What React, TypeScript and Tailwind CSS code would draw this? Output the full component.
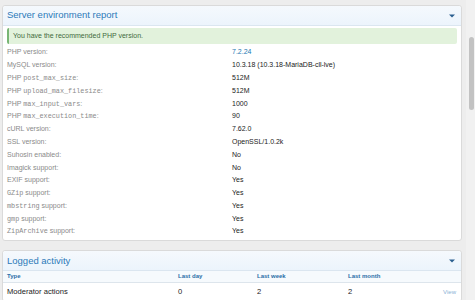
import React from "react";

const mono = "font-['Liberation_Mono',monospace]";

function Code({ children }: { children: React.ReactNode }) {
  return <span className={`${mono} text-[6.8px]`}>{children}</span>;
}

const rows: { label: React.ReactNode; value: React.ReactNode }[] = [
  { label: "PHP version:", value: <span className="text-[#2577b1]">7.2.24</span> },
  { label: "MySQL version:", value: "10.3.18 (10.3.18-MariaDB-cll-lve)" },
  { label: <>PHP <Code>post_max_size</Code>:</>, value: "512M" },
  { label: <>PHP <Code>upload_max_filesize</Code>:</>, value: "512M" },
  { label: <>PHP <Code>max_input_vars</Code>:</>, value: "1000" },
  { label: <>PHP <Code>max_execution_time</Code>:</>, value: "90" },
  { label: "cURL version:", value: "7.62.0" },
  { label: "SSL version:", value: "OpenSSL/1.0.2k" },
  { label: "Suhosin enabled:", value: "No" },
  { label: "Imagick support:", value: "No" },
  { label: "EXIF support:", value: "Yes" },
  { label: <><Code>GZip</Code> support:</>, value: "Yes" },
  { label: <><Code>mbstring</Code> support:</>, value: "Yes" },
  { label: <><Code>gmp</Code> support:</>, value: "Yes" },
  { label: <><Code>ZipArchive</Code> support:</>, value: "Yes" },
];

function Chevron() {
  return (
    <svg width="6" height="4" viewBox="0 0 6 4" className="mr-[2px]">
      <path d="M0 0.5 L6 0.5 L3 3.5 Z" fill="#2b5f8f" />
    </svg>
  );
}

function BlockHeader({ title }: { title: string }) {
  return (
    <div className="h-[20px] flex items-center justify-between px-[4px] bg-gradient-to-b from-[#f5f9fd] to-[#ecf4fc] border-b border-[#dbe6f0] rounded-t-[3px]">
      <span className="text-[9.5px] text-[#2d7ab9]">{title}</span>
      <Chevron />
    </div>
  );
}

export default function App() {
  return (
    <div className="w-[475px] h-[300px] overflow-hidden bg-[#ededed] flex font-['Liberation_Sans',Arial,sans-serif]">
      <div className="w-[466px] pl-[2px] pr-[4px] pt-[5px]">
        {/* Server environment report */}
        <div className="bg-white border border-[#dadada] rounded-[3px] mb-[9px]">
          <BlockHeader title="Server environment report" />
          <div className="px-[4px] pt-[2px] pb-[2px]">
            <div className="h-[16px] flex items-center pl-[4px] bg-[#e2f2dc] border-l-[2px] border-[#78b574] rounded-[2px] text-[7px] text-[#3f6a3c]">
              You have the recommended PHP version.
            </div>
            <div className="mt-[2.2px]">
              {rows.map((r, i) => (
                <div key={i} className="h-[12.8px] flex items-center text-[7px]">
                  <div className="w-[225px] text-[#8a8a8a]">{r.label}</div>
                  <div className="text-[#222]">{r.value}</div>
                </div>
              ))}
            </div>
          </div>
        </div>

        {/* Logged activity */}
        <div className="bg-white border border-[#dadada] rounded-[3px]">
          <BlockHeader title="Logged activity" />
          <div className="h-[12px] flex items-center px-[4px] bg-[#f6fafd] border-b border-[#dde5ec] text-[6px] font-bold text-[#2c6fa8]">
            <div className="w-[171px]">Type</div>
            <div className="w-[79px]">Last day</div>
            <div className="w-[91px]">Last week</div>
            <div>Last month</div>
          </div>
          <div className="h-[18px] flex items-center px-[4px] text-[7.6px] text-[#222]">
            <div className="w-[171px]">Moderator actions</div>
            <div className="w-[79px]">0</div>
            <div className="w-[91px]">2</div>
            <div className="flex-1">2</div>
            <div className="text-[6px] text-[#8bb3d6] pr-[1px]">View</div>
          </div>
        </div>
      </div>

      {/* scrollbar */}
      <div className="w-[9px] h-full bg-[#f1f1f1] pt-[37px] pl-[3px]">
        <div className="w-[5px] h-[73px] rounded-[3px] bg-[#c2c2c2]" />
      </div>
    </div>
  );
}
